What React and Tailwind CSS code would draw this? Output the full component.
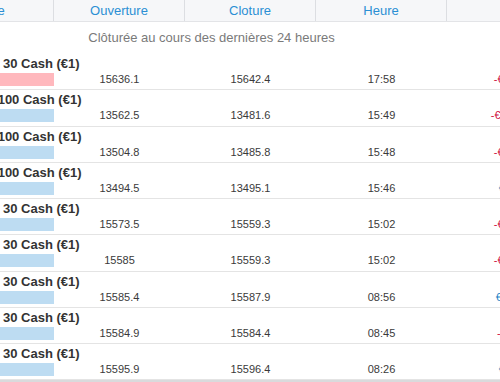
import React from 'react';

const rows = [
  { name: 'Germany 30 Cash (€1)', bar: 'bg-[#ffb8bd]', open: '15636.1', close: '15642.4', time: '17:58', pl: '-€12.60', up: false },
  { name: 'US Tech 100 Cash (€1)', bar: 'bg-[#bddcf2]', open: '13562.5', close: '13481.6', time: '15:49', pl: '-€161.80', up: false },
  { name: 'US Tech 100 Cash (€1)', bar: 'bg-[#bddcf2]', open: '13504.8', close: '13485.8', time: '15:48', pl: '-€19.00', up: false },
  { name: 'US Tech 100 Cash (€1)', bar: 'bg-[#bddcf2]', open: '13494.5', close: '13495.1', time: '15:46', pl: '€0.60', up: true },
  { name: 'Germany 30 Cash (€1)', bar: 'bg-[#bddcf2]', open: '15573.5', close: '15559.3', time: '15:02', pl: '-€14.20', up: false },
  { name: 'Germany 30 Cash (€1)', bar: 'bg-[#bddcf2]', open: '15585', close: '15559.3', time: '15:02', pl: '-€25.70', up: false },
  { name: 'Germany 30 Cash (€1)', bar: 'bg-[#bddcf2]', open: '15585.4', close: '15587.9', time: '08:56', pl: '€25.00', up: true },
  { name: 'Germany 30 Cash (€1)', bar: 'bg-[#bddcf2]', open: '15584.9', close: '15584.4', time: '08:45', pl: '-€0.50', up: false },
  { name: 'Germany 30 Cash (€1)', bar: 'bg-[#bddcf2]', open: '15595.9', close: '15596.4', time: '08:26', pl: '€0.50', up: true },
];

const headers = ['Ordre', 'Ouverture', 'Cloture', 'Heure', 'P/P'];

export default function App() {
  return (
    <div className="w-[500px] h-[382px] overflow-hidden bg-white" style={{ fontFamily: '"Liberation Sans", Arial, sans-serif' }}>
      <div className="w-[655px] -ml-[77px]">
        <div className="grid grid-cols-5 h-[22px] bg-[#f6f7f9] border-b border-[#e3e4e7]">
          {headers.map((h, i) => (
            <div key={i} className={`flex items-center justify-center text-[13px] leading-[15px] text-[#2b8fd4] ${i < 4 ? 'border-r border-[#dcdee2]' : ''}`}>{h}</div>
          ))}
        </div>
        <div className="h-[32px] pt-[8px] pl-[77px] w-[500px] text-center text-[13px] leading-[15px] text-[#7a7a7a]">
          Clôturée au cours des dernières 24 heures
        </div>
        {rows.map((r, i) => (
          <div key={i} className="h-[36.25px] border-b border-[#e4e4e4] pt-[2px]">
            <div className="pl-[20px] text-[13px] leading-[16px] font-bold text-[#333] whitespace-nowrap">{r.name}</div>
            <div className="grid grid-cols-5 items-center mt-[1px] h-[13px] text-[11px] leading-[13px] text-[#3a3a3a]">
              <div className="h-[13px] pl-[12px]">
                <div className={`h-full ${r.bar}`} />
              </div>
              <div className="text-center">{r.open}</div>
              <div className="text-center">{r.close}</div>
              <div className="text-center">{r.time}</div>
              <div className={`text-center ${r.up ? 'text-[#1c7fc4]' : 'text-[#cf1140]'}`}>{r.pl}</div>
            </div>
          </div>
        ))}
        <div className="h-[2px] bg-[#d9dadc]" />
      </div>
    </div>
  );
}
